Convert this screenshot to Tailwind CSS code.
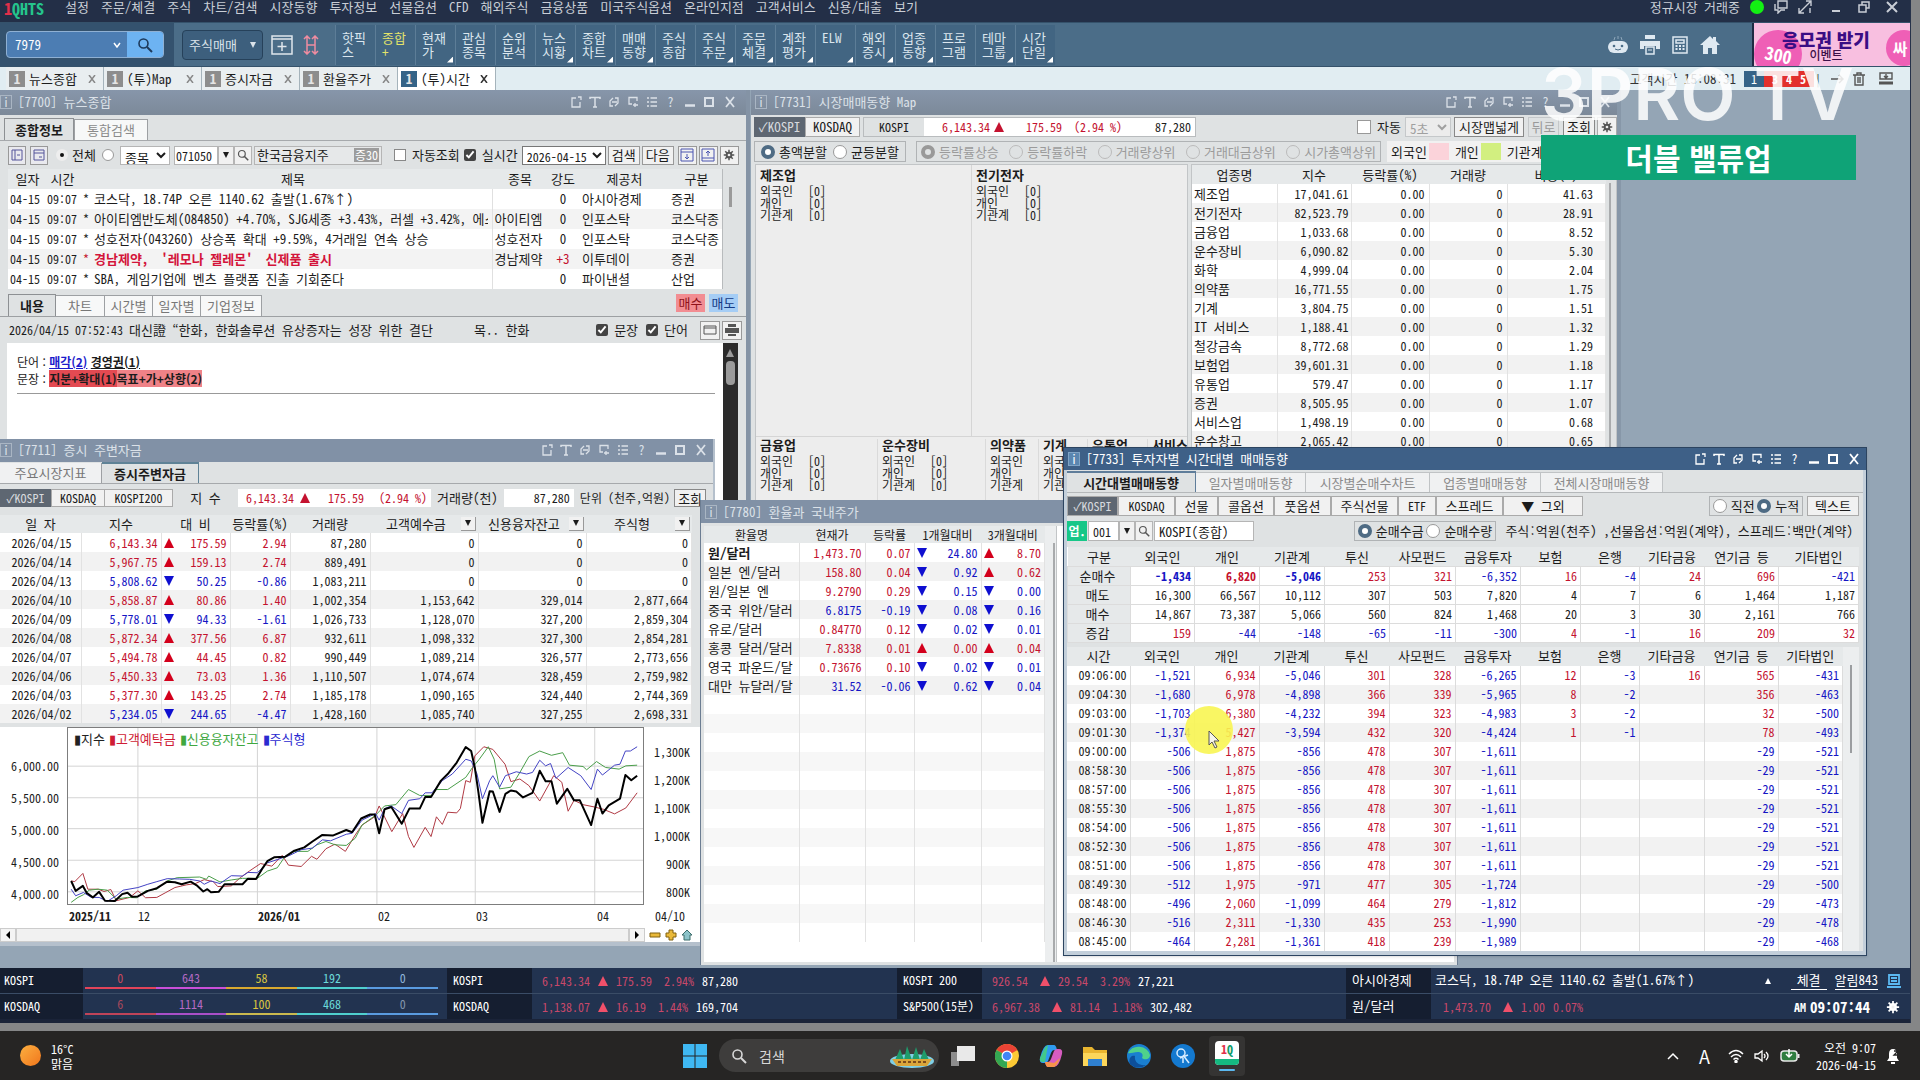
<!DOCTYPE html>
<html lang="ko">
<head>
    <meta charset="UTF-8">
    <meta name="viewport" content="width=device-width, initial-scale=1.0">
    <title>1QHTS</title>
    <script src="https://cdn.jsdelivr.net/npm/@tailwindcss/browser@4"></script>
</head>
<body class="flex h-screen flex-col overflow-hidden bg-[#858687] font-['Noto_Sans_Mono_CJK_KR','Noto_Sans_CJK_KR',sans-serif] text-[13px] leading-4 text-[#1c1c1c]">

    <!-- Shared icons -->
    <svg class="hidden">
        <symbol id="i-search" viewBox="0 0 16 16"><circle cx="6.5" cy="6.5" r="4.5" fill="none" stroke="currentColor" stroke-width="1.6"/><path d="M10 10l5 5" stroke="currentColor" stroke-width="2"/></symbol>
        <symbol id="i-gear" viewBox="0 0 16 16"><path d="M8 1v14M1 8h14M3 3l10 10M13 3L3 13" stroke="currentColor" stroke-width="2"/><circle cx="8" cy="8" r="4.5" fill="currentColor"/><circle cx="8" cy="8" r="1.8" fill="#eee"/></symbol>
        <symbol id="i-up" viewBox="0 0 10 10"><path d="M5 0l5 10H0z" fill="currentColor"/></symbol>
        <symbol id="i-down" viewBox="0 0 10 10"><path d="M0 0h10L5 10z" fill="currentColor"/></symbol>
    </svg>

    <template id="window-tools">
        <button aria-label="분리" class="grid h-4 w-[19px] place-items-center"><svg class="size-3" viewBox="0 0 12 12" fill="none" stroke="currentColor" stroke-width="1.3"><path d="M6 2H2v9h8V6M8 1h3v3"/></svg></button>
        <button aria-label="글꼴" class="grid h-4 w-[19px] place-items-center"><svg class="size-3" viewBox="0 0 12 12" fill="none" stroke="currentColor" stroke-width="1.5"><path d="M1 3V1.500h10V3M6 2v9M4 11h4"/></svg></button>
        <button aria-label="연동" class="grid h-4 w-[19px] place-items-center"><svg class="size-3" viewBox="0 0 12 12" fill="none" stroke="currentColor" stroke-width="1.3"><path d="M5 2L2 5v5h3M7 2h3v5L7 10M4 6h5"/></svg></button>
        <button aria-label="복사" class="grid h-4 w-[19px] place-items-center"><svg class="size-3" viewBox="0 0 12 12" fill="none" stroke="currentColor" stroke-width="1.3"><path d="M10 5V1.500H2V8h3M8 7v4M6 9h5"/></svg></button>
        <button aria-label="목록" class="grid h-4 w-[19px] place-items-center"><svg class="size-3" viewBox="0 0 12 12" stroke="currentColor" stroke-width="1.3"><path d="M1 2h2M4.500 2H11M1 6h2M4.500 6H11M1 10h2M4.500 10H11"/></svg></button>
        <button aria-label="도움말" class="h-4 w-[19px] text-center">?</button>
        <button aria-label="최소화" class="grid h-4 w-[19px] place-items-center"><svg class="size-3" viewBox="0 0 12 12" stroke="currentColor" stroke-width="2.500"><path d="M1 9.500h10"/></svg></button>
        <button aria-label="최대화" class="grid h-4 w-[19px] place-items-center"><svg class="size-3" viewBox="0 0 12 12" fill="none" stroke="currentColor" stroke-width="2"><path d="M2 2h8v8H2z"/></svg></button>
        <button aria-label="닫기" class="grid h-4 w-[24px] place-items-center"><svg class="size-3" viewBox="0 0 12 12" stroke="currentColor" stroke-width="1.800"><path d="M2 1l8 10M10 1L2 11"/></svg></button>
    </template>

    <div class="mr-[9px] flex min-h-0 flex-1 flex-col border-r border-[#26324a] bg-[#94a5b5]">

        <!-- Menu bar -->
        <header class="flex h-[22px] shrink-0 items-start justify-between bg-[#232f47] text-[#c9ced6]">
            <div class="flex items-start">
                <div class="flex w-[65px] pl-1 text-base leading-4 font-bold text-[#25c48c]"><span class="text-[#e2304a]">1</span>QHTS</div>
                <nav id="menu" class="flex gap-3 text-[13px] leading-[14px]"></nav>
            </div>
            <div class="flex items-center gap-2.5 leading-[14px]">
                <span>정규시장 거래중</span>
                <span class="size-3.5 rounded-full bg-[#13f013]"></span>
                <svg class="size-3.5" viewBox="0 0 14 14" fill="none" stroke="currentColor" stroke-width="1.4"><path d="M4 1h9v7H4zM1 4v6h3v3l3-3h4"/></svg>
                <svg class="size-3.5" viewBox="0 0 14 14" fill="none" stroke="currentColor" stroke-width="1.4"><path d="M1 13L13 1M8 1h5v5M1 8v5h5M12 8v5"/></svg>
                <div class="flex pr-1">
                    <button aria-label="최소화" class="grid w-7 place-items-center"><svg class="size-3" viewBox="0 0 12 12" stroke="currentColor" stroke-width="2"><path d="M2 10h8"/></svg></button>
                    <button aria-label="이전 크기" class="grid w-7 place-items-center"><svg class="size-3" viewBox="0 0 12 12" fill="none" stroke="currentColor" stroke-width="1.500"><path d="M4 4V1h7v6H8M1 4h7v7H1z"/></svg></button>
                    <button aria-label="닫기" class="grid w-7 place-items-center"><svg class="size-3" viewBox="0 0 12 12" stroke="currentColor" stroke-width="2"><path d="M1 1l10 10M11 1L1 11"/></svg></button>
                </div>
            </div>
        </header>

        <!-- Toolbar -->
        <div class="flex h-[45px] shrink-0 items-center border-y border-[#35526b] bg-[#4b6d88]">
            <div class="flex h-full w-[174px] items-center bg-[#34526e] pl-1.5">
                <div class="flex h-[27px] w-[158px] overflow-hidden rounded-sm border border-[#8fb0d3] bg-[#4c7db3]">
                    <input aria-label="화면번호" value="7979" class="w-[100px] min-w-0 pl-2 text-white">
                    <button aria-label="목록" class="grid w-5 place-items-center text-white"><svg class="size-2" viewBox="0 0 8 8" fill="none" stroke="currentColor" stroke-width="1.500"><path d="M1 2l3 4 3-4"/></svg></button>
                    <button aria-label="검색" class="grid flex-1 place-items-center bg-[#6db3f2] text-[#1d3a5c]"><svg class="size-4"><use href="#i-search"/></svg></button>
                </div>
            </div>
            <button class="ml-2 flex h-[30px] w-[81px] items-center justify-between rounded-sm border border-[#26415a] bg-[#3d5f7d] px-1.5 text-[#dbe3ea]">주식매매 <svg class="size-1.5"><use href="#i-down"/></svg></button>
            <button aria-label="화면추가" class="ml-2 text-[#dfe6ec]"><svg class="h-5 w-[22px]" viewBox="0 0 22 20" fill="none" stroke="currentColor" stroke-width="1.500"><path d="M1 1h20v18H1zM1 4h20M11 7v9M6.500 11.500h9"/></svg></button>
            <button aria-label="홈화면" class="ml-2.5 text-[#ef8ca0]"><svg class="h-5 w-4" viewBox="0 0 16 20" fill="none" stroke="currentColor" stroke-width="1.500"><path d="M4 1v18M12 1v18M4 10h8M1 4l3-3 3 3M9 4l3-3 3 3M1 16l3 3 3-3M9 16l3 3 3-3"/></svg></button>
            <div id="quick" class="ml-4 flex"></div>
            <div class="ml-auto flex h-full items-center text-[#dfe9f1]">
                <svg class="mr-3 h-[18px] w-5" viewBox="0 0 20 18"><path d="M6 4l1-3M10 3V0M14 4l-1-3" stroke="#8fa7ba"/><rect x="0" y="5" width="20" height="12" rx="6" fill="currentColor"/><circle cx="6" cy="10" r="1.300" fill="#4b6d88"/><circle cx="14" cy="10" r="1.300" fill="#4b6d88"/><path d="M7 13q3 2 6 0" stroke="#4b6d88" fill="none"/></svg>
                <svg class="mr-3 h-5 w-[20px]" viewBox="0 0 20 20"><path d="M5 0h10v4H5zM0 6h20v8h-4v-3H4v3H0z" fill="currentColor"/><path d="M6 12h8v7H6z" fill="none" stroke="currentColor" stroke-width="1.500"/><path d="M8 15h4" stroke="currentColor"/></svg>
                <svg class="mr-3 h-[18px] w-4" viewBox="0 0 16 18" fill="none" stroke="currentColor" stroke-width="1.500"><path d="M1 1h14v16H1zM4 4h8v3H4z"/><path d="M3.500 10h2M7 10h2M10.500 10h2M3.500 13h2M7 13h2M10.500 13h2" stroke-width="2"/></svg>
                <svg class="mr-8 h-5 w-5" viewBox="0 0 20 20"><path d="M10 1L0 10h3v9h5v-6h4v6h5v-9h3l-4-4V2h-3v2z" fill="currentColor"/></svg>
                <a href="#" class="relative flex h-full w-[158px] items-center justify-center overflow-hidden border-l-2 border-[#1e2b43] bg-[#f8bfe0] pr-3 leading-none">
                    <span class="absolute -bottom-3 left-0 grid size-12 place-items-center rounded-full bg-[#ef5fb6] text-lg font-black text-white"><span class="rotate-12">300</span></span>
                    <span class="absolute -right-3 bottom-0 grid size-9 place-items-center rounded-full bg-[#ef5fb6] pr-2 text-base font-black text-white">싸</span>
                    <span class="relative text-center font-['Noto_Sans_CJK_KR'] text-lg leading-5 font-black text-[#3a0d84]">응모권 받기<span class="block text-xs leading-3 font-medium text-[#3b1048]">이벤트</span></span>
                </a>
            </div>
        </div>

        <!-- Screen tabs -->
        <div class="flex h-[23px] shrink-0 items-stretch justify-between bg-[#e1edf2]">
            <div id="screens" class="flex pl-1.5"></div>
            <div class="flex items-center gap-2 pr-4 text-[#333]">
                <span>고객시간 15:08:31</span>
                <div class="flex h-4 w-[78px] text-center text-xs leading-4 text-white">
                    <span class="w-5 bg-[#356387]">1</span><span class="flex flex-1 justify-evenly bg-[#e2302c]"><b>3</b><b>4</b><b>5</b></span><span class="w-2 text-[#333]">|</span>
                </div>
                <svg class="size-3.5" viewBox="0 0 14 14" fill="none" stroke="#555" stroke-width="1.400"><path d="M1 7h12M9 3l4 4-4 4"/></svg>
                <svg class="size-3.5" viewBox="0 0 14 14" fill="none" stroke="#555" stroke-width="1.400"><path d="M1 3h12M5 3V1h4v2M3 3v10h8V3M6 5v6M8 5v6"/></svg>
                <svg class="ml-1 h-3.5 w-4" viewBox="0 0 16 14" fill="none" stroke="#555" stroke-width="1.400"><path d="M2 1h12v6H2zM8 2v4M6 4l2 2 2-2"/><path d="M1 11h14" stroke-width="3"/></svg>
            </div>
        </div>

        <!-- Window area -->
        <main class="relative min-h-0 flex-1 overflow-hidden">

            <!-- 7700 news -->
            <section class="absolute top-0 left-0 w-[750px] border-r-4 border-[#8493a5] bg-[#dfe2e3]">
                <h2 class="flex h-[25px] items-center justify-between bg-linear-to-b from-[#8796aa] to-[#7c8999] pb-0.5 text-[#dbe1e8]">
                    <span class="flex items-center gap-1.5"><i class="h-3.5 w-3 border border-[#a9b5c3] text-center text-xs leading-3 not-italic">i</i>[7700] 뉴스종합</span><span class="win-tools flex pr-1"></span>
                </h2>
                <div class="flex h-[26px] items-end border-b border-[#a6a9ac] pl-1">
                    <button class="h-[22px] w-[70px] border border-b-0 border-[#8d9093] bg-[#dfe2e3] font-bold">종합정보</button>
                    <button class="h-[21px] w-[74px] border border-b-0 border-[#9da0a3] bg-[#f7f8f8] text-[#8b8b8b]">통합검색</button>
                </div>
                <div class="flex h-[28px] items-center pl-2">
                    <button aria-label="좌측보기" class="mr-1 grid h-[19px] w-[18px] place-items-center border border-[#999] bg-[#e9e9ee]"><svg class="size-3" viewBox="0 0 12 12" fill="none" stroke="#54549a"><path d="M1 1h10v10H1zM4 1v10M6 6h3"/></svg></button>
                    <button aria-label="상단보기" class="mr-2 grid h-[19px] w-[18px] place-items-center border border-[#999] bg-[#e9e9ee]"><svg class="size-3" viewBox="0 0 12 12" fill="none" stroke="#54549a"><path d="M1 1h10v10H1zM1 4h10M6 8h3"/></svg></button>
                    <label class="flex items-center gap-1"><input type="radio" name="scope" checked class="size-3 appearance-none rounded-full border border-[#888] bg-white checked:border-4 checked:border-[#eee] checked:bg-[#111]">전체</label>
                    <input type="radio" name="scope" aria-label="종목" class="ml-1.5 size-3 appearance-none rounded-full border border-[#999] bg-white">
                    <select aria-label="구분" class="ml-1.5 h-[19px] w-[50px] border border-[#b5b5b5] bg-white"><option>종목</option></select>
                    <input aria-label="종목코드" value="071050" class="ml-1 h-[19px] w-[44px] border border-[#b5b5b5] bg-white pl-px text-xs">
                    <button aria-label="최근종목" class="grid h-[19px] w-4 place-items-center border border-[#b5b5b5] bg-[#f1f1f1]"><svg class="size-1.5"><use href="#i-down"/></svg></button>
                    <button aria-label="종목찾기" class="grid h-[19px] w-[18px] place-items-center border border-[#b5b5b5] bg-[#f1f1f1] text-[#555]"><svg class="size-3"><use href="#i-search"/></svg></button>
                    <span class="ml-0.5 flex h-[19px] w-[128px] items-center justify-between border border-[#b5b5b5] bg-[#e6e8e9] px-0.5">한국금융지주<b class="bg-[#9c9c9c] px-px text-xs leading-[14px] font-normal text-white">증30</b></span>
                    <label class="ml-3 flex items-center gap-1.5"><input type="checkbox" class="size-3 appearance-none border border-[#888] bg-white">자동조회</label>
                    <label class="ml-1 flex items-center gap-1.5"><input type="checkbox" checked class="size-3 accent-[#444]">실시간</label>
                    <select aria-label="일자" class="ml-1 h-[19px] w-[84px] border border-[#777] bg-white text-xs"><option>2026-04-15</option></select>
                    <button class="ml-0.5 h-[19px] w-8 border border-[#999] bg-[#f1f1f1]">검색</button>
                    <button class="ml-0.5 h-[19px] w-8 border border-[#999] bg-[#f1f1f1]">다음</button>
                    <button aria-label="펼치기" class="ml-1 grid size-[19px] place-items-center border border-[#999] bg-[#f1f1f1]"><svg class="size-3.5" viewBox="0 0 14 14" fill="none" stroke="#4a55b0"><path d="M1 1h12v12H1zM1 4h12M7 6v5M5 9l2 2 2-2"/></svg></button>
                    <button aria-label="접기" class="ml-0.5 grid size-[19px] place-items-center border border-[#999] bg-[#f1f1f1]"><svg class="size-3.5" viewBox="0 0 14 14" fill="none" stroke="#4a55b0"><path d="M1 1h12v12H1zM1 10h12M7 8V3M5 5l2-2 2 2"/></svg></button>
                    <button aria-label="설정" class="ml-0.5 grid size-[19px] place-items-center border border-[#999] bg-[#f1f1f1] text-[#555]"><svg class="size-3"><use href="#i-gear"/></svg></button>
                </div>
                <div class="flex pl-2">
                    <table class="w-[714px] table-fixed border-collapse bg-white">
                        <colgroup><col class="w-[39px]"><col class="w-[31px]"><col class="w-[16px]"><col class="w-[398px]"><col class="w-[56px]"><col class="w-[30px]"><col class="w-[93px]"><col></colgroup>
                        <thead class="bg-[#e6e9ea]">
                            <tr class="h-5 *:p-0 *:font-normal"><th>일자</th><th>시간</th><th></th><th>제목</th><th>종목</th><th>강도</th><th>제공처</th><th>구분</th></tr>
                        </thead>
                        <tbody id="news"></tbody>
                    </table>
                    <div class="flex-1 border-l border-[#b8bbbd] pt-[18px] pl-1.5"><div class="h-5 w-[3px] bg-[#9a9a9a]"></div></div>
                </div>
                <div class="flex h-7 items-end justify-between border-b border-[#9da0a3] pl-2">
                    <div class="flex">
                        <button class="h-[22px] w-[48px] border border-b-0 border-[#8d9093] bg-[#dfe2e3] font-bold">내용</button>
                        <button class="h-[21px] w-[49px] self-end border border-b-0 border-l-0 border-[#9da0a3] bg-[#f7f8f8] text-[#777]">차트</button>
                        <button class="h-[21px] w-[48px] self-end border border-b-0 border-l-0 border-[#9da0a3] bg-[#f7f8f8] text-[#777]">시간별</button>
                        <button class="h-[21px] w-[48px] self-end border border-b-0 border-l-0 border-[#9da0a3] bg-[#f7f8f8] text-[#777]">일자별</button>
                        <button class="h-[21px] w-[61px] self-end border border-b-0 border-l-0 border-[#9da0a3] bg-[#f7f8f8] text-[#777]">기업정보</button>
                    </div>
                    <div class="flex gap-1 self-center pr-2">
                        <button class="h-[18px] w-[29px] bg-[#f28d92] text-[#8e1219]">매수</button>
                        <button class="h-[18px] w-[29px] bg-[#a5cdf5] text-[#143a86]">매도</button>
                    </div>
                </div>
                <div class="flex h-[26px] items-center pl-[9px]">
                    <span class="text-xs">2026/04/15 07:52:43&nbsp;</span><span class="w-[345px]">대신證 “한화, 한화솔루션 유상증자는 성장 위한 결단</span><span>목.. 한화</span>
                    <label class="ml-auto flex items-center gap-1.5"><input type="checkbox" checked class="size-3 accent-[#444]">문장</label>
                    <label class="ml-2 flex items-center gap-1.5"><input type="checkbox" checked class="size-3 accent-[#444]">단어</label>
                    <button aria-label="새창" class="ml-3 grid h-[19px] w-5 place-items-center border border-[#999] bg-[#f1f1f1]"><svg class="h-2.5 w-3.5" viewBox="0 0 14 10" fill="none" stroke="#555"><path d="M1 1h12v8H1zM1 3h12"/></svg></button>
                    <button aria-label="인쇄" class="mr-1 ml-0.5 grid h-[19px] w-5 place-items-center border border-[#999] bg-[#f1f1f1]"><svg class="h-3 w-3.5" viewBox="0 0 14 12" fill="#555"><path d="M3 0h8v3H3zM0 4h14v5H0zM3 10h8v2H3z"/></svg></button>
                </div>
                <div class="ml-[7px] flex h-[180px] bg-white">
                    <div class="flex-1 pt-2.5 pl-2.5 font-['Noto_Sans_CJK_KR',sans-serif] text-xs leading-[17px]">
                        <p>단어 : <a href="#" class="font-bold text-[#1c1ccb] underline">매각(2)</a> <a href="#" class="font-bold underline">경영권(1)</a></p>
                        <p>문장 : <b class="bg-[#e34a52]">지분+확대(1)</b><b class="bg-[#ef8287]">목표+가+상향(2)</b></p>
                        <hr class="mt-1.5 mr-2 border-[#999]">
                    </div>
                    <div class="w-[15px] bg-[#2b2b2b] px-[3px] pt-1.5 text-[#9b9b9b]"><svg class="size-2"><use href="#i-up"/></svg><div class="mt-1 h-6 rounded bg-[#9b9b9b]"></div></div>
                    <div class="w-2 bg-[#dfe2e3]"></div>
                </div>
            </section>

            <!-- 7731 market map -->
            <section class="absolute top-0 left-[751px] w-[870px] border-r-4 border-[#8797a8] bg-[#dfe2e3]">
                <h2 class="flex h-[25px] items-center justify-between bg-linear-to-b from-[#8796aa] to-[#7c8999] pb-0.5 text-[#dbe1e8]">
                    <span class="flex items-center gap-1.5 pl-1"><i class="h-3.5 w-3 border border-[#a9b5c3] text-center text-xs leading-3 not-italic">i</i>[7731] 시장매매동향 Map</span><span class="win-tools flex"></span>
                </h2>
                <div class="flex h-[24px] items-center pl-[3px]">
                    <button class="h-5 w-[51px] bg-[#5e6772] text-[#d7dade]">✓KOSPI</button>
                    <button class="h-5 w-[55px] border border-[#aaa] bg-[#f1f1f1]">KOSDAQ</button>
                    <div class="ml-[3px] flex h-5 w-[333px] items-center border border-[#b9bcbe]">
                        <span class="w-[60px] text-center text-xs">KOSPI</span>
                        <div class="flex flex-1 items-center self-stretch bg-white pr-1 text-xs text-[#c4122f]"><span class="w-[66px] text-right">6,143.34</span><svg class="mx-1 size-2.5"><use href="#i-up"/></svg><span class="w-[54px] text-right">175.59</span><span class="w-[60px] text-right">(2.94 %)</span><span class="ml-auto text-[#1c1c1c]">87,280</span></div>
                    </div>
                    <label class="ml-auto flex items-center gap-1.5"><input type="checkbox" class="size-3.5 appearance-none border border-[#999] bg-white">자동</label>
                    <select aria-label="주기" disabled class="ml-1 h-5 w-[46px] border border-[#c5c8ca] bg-[#ececec] text-[#a0a0a0]"><option>5초</option></select>
                    <button class="ml-[3px] h-5 w-[70px] border border-[#888] bg-[#f1f1f1]">시장맵넓게</button>
                    <button disabled class="ml-1 h-5 w-[31px] border border-[#c5c8ca] text-[#999]">뒤로</button>
                    <button class="ml-1 h-5 w-8 border border-[#888] bg-[#f1f1f1]">조회</button>
                    <button aria-label="설정" class="ml-0.5 grid size-5 place-items-center border border-[#aaa] bg-[#f1f1f1] text-[#555]"><svg class="size-3"><use href="#i-gear"/></svg></button>
                </div>
                <div class="flex h-[25px] items-center pl-[3px]">
                    <div class="flex h-[21px] w-[152px] items-center justify-evenly border border-[#b0b3b5]">
                        <label class="flex items-center gap-1"><input type="radio" name="split" checked class="size-3.5 appearance-none rounded-full border border-[#999] bg-white checked:border-4 checked:border-[#4e6b84]">총액분할</label>
                        <label class="flex items-center gap-1"><input type="radio" name="split" class="size-3.5 appearance-none rounded-full border border-[#999] bg-white">균등분할</label>
                    </div>
                    <div class="ml-2.5 flex h-[21px] w-[465px] items-center justify-between border border-[#b0b3b5] px-1 text-[#9b9b9b]">
                        <label class="flex items-center gap-1"><input type="radio" name="sort" disabled checked class="size-3.5 appearance-none rounded-full border border-[#bbb] checked:border-4 checked:border-[#999]">등락률상승</label>
                        <label class="flex items-center gap-1"><input type="radio" name="sort" disabled class="size-3.5 appearance-none rounded-full border border-[#bbb]">등락률하락</label>
                        <label class="flex items-center gap-1"><input type="radio" name="sort" disabled class="size-3.5 appearance-none rounded-full border border-[#bbb]">거래량상위</label>
                        <label class="flex items-center gap-1"><input type="radio" name="sort" disabled class="size-3.5 appearance-none rounded-full border border-[#bbb]">거래대금상위</label>
                        <label class="flex items-center gap-1"><input type="radio" name="sort" disabled class="size-3.5 appearance-none rounded-full border border-[#bbb]">시가총액상위</label>
                    </div>
                    <div class="ml-1.5 flex h-[21px] flex-1 items-center gap-1.5 bg-[#f1f1f1] pl-1">외국인<i class="-ml-1 h-[17px] w-5 bg-[#fbd3da]"></i>개인<i class="-ml-1 h-[17px] w-5 bg-[#d2ef80]"></i>기관계<i class="-ml-1 h-[17px] w-5 bg-[#bcd9f5]"></i></div>
                </div>
                <div class="flex pl-1">
                    <div class="flex w-[433px] flex-col border border-[#c2c5c7] bg-[#ededed]">
                        <div class="flex h-[272px] border-b border-[#d5d5d5]">
                            <div class="w-[216px] border-r border-[#d5d5d5] pt-1 pl-1 text-xs leading-3"><b class="mb-1 block text-[13px]">제조업</b><p class="flex"><span class="w-[48px]">외국인</span>[0]</p><p class="flex"><span class="w-[48px]">개인</span>[0]</p><p class="flex"><span class="w-[48px]">기관계</span>[0]</p></div>
                            <div class="pt-1 pl-1 text-xs leading-3"><b class="mb-1 block text-[13px]">전기전자</b><p class="flex"><span class="w-[48px]">외국인</span>[0]</p><p class="flex"><span class="w-[48px]">개인</span>[0]</p><p class="flex"><span class="w-[48px]">기관계</span>[0]</p></div>
                        </div>
                        <div id="sectors" class="flex h-[90px] overflow-hidden pt-0.5"></div>
                    </div>
                    <div class="ml-[3px] flex flex-1 border border-[#c2c5c7]">
                        <table class="w-[414px] table-fixed self-start border-collapse bg-white text-xs">
                            <colgroup><col class="w-[85px]"><col class="w-[74px]"><col class="w-[78px]"><col class="w-[78px]"><col></colgroup>
                            <thead class="bg-[#e6e9ea] text-[13px]"><tr class="h-[19px] *:p-0 *:font-normal"><th>업종명</th><th>지수</th><th>등락률(%)</th><th>거래량</th><th>비중(%)</th></tr></thead>
                            <tbody id="industries"></tbody>
                        </table>
                        <div class="pt-[18px] pl-[3px]"><div class="h-full w-0.5 bg-[#a9abad]"></div></div>
                    </div>
                </div>
            </section>

            <!-- 7711 market funds -->
            <section class="absolute top-[349px] left-0 w-[715px] border-r-2 border-b-4 border-[#b5c0cc] bg-[#dfe2e3]">
                <h2 class="flex h-[23px] items-center justify-between bg-[#8191a6] pb-px text-[#dbe1e8]">
                    <span class="flex items-center gap-1.5"><i class="h-3.5 w-3 border border-[#a9b5c3] text-center text-xs leading-3 not-italic">i</i>[7711] 증시 주변자금</span><span class="win-tools flex"></span>
                </h2>
                <div class="flex h-[22px] items-end border-b border-[#a6a9ac]">
                    <button class="h-5 w-[102px] border-r border-[#9da0a3] bg-[#f0f1f2] text-[#777]">주요시장지표</button>
                    <button class="h-[21px] w-[97px] border-t-2 border-r border-[#5f8296] bg-[#dfe2e3] font-bold">증시주변자금</button>
                </div>
                <div class="flex h-7 items-center text-xs">
                    <button class="h-[18px] w-[51px] bg-[#5e6772] text-[#d7dade]">✓KOSPI</button>
                    <button class="h-[18px] w-[54px] border border-[#aaa] bg-[#f1f1f1]">KOSDAQ</button>
                    <button class="h-[18px] w-[68px] border border-l-0 border-[#aaa] bg-[#f1f1f1]">KOSPI200</button>
                    <span class="w-[65px] text-center text-[13px]">지 수</span>
                    <div class="flex h-[18px] w-[193px] items-center bg-white text-[#c4122f]"><span class="w-[56px] text-right">6,143.34</span><svg class="mx-1.5 size-2.5"><use href="#i-up"/></svg><span class="w-[48px] text-right">175.59</span><span class="ml-auto pr-1">(2.94 %)</span></div>
                    <span class="px-1.5 text-[13px]">거래량(천)</span>
                    <span class="h-[18px] w-[70px] bg-white pr-1 text-right leading-[18px]">87,280</span>
                    <span class="pl-1.5">단위 (천주,억원)</span>
                    <button class="ml-1 h-[18px] w-8 border border-[#888] bg-[#f1f1f1] text-[13px]">조회</button>
                </div>
                <table class="mt-[3px] w-[692px] table-fixed border-collapse bg-white text-xs">
                    <colgroup><col class="w-[81px]"><col class="w-[80px]"><col class="w-[69px]"><col class="w-[60px]"><col class="w-[80px]"><col class="w-[108px]"><col class="w-[108px]"><col></colgroup>
                    <thead class="bg-[#e6e9ea] text-[13px]">
                        <tr class="h-[18px] *:p-0 *:font-normal"><th>일 자</th><th>지수</th><th>대 비</th><th>등락률(%)</th><th>거래량</th>
                            <th><span class="flex items-center justify-between pr-0.5 pl-4">고객예수금<button aria-label="고객예수금 선택" class="grid h-3.5 w-[15px] place-items-center border-r border-b border-[#999] bg-[#f1f1f1]"><svg class="size-1.5"><use href="#i-down"/></svg></button></span></th>
                            <th><span class="flex items-center justify-between pr-0.5 pl-2.5">신용융자잔고<button aria-label="신용융자잔고 선택" class="grid h-3.5 w-[15px] place-items-center border-r border-b border-[#999] bg-[#f1f1f1]"><svg class="size-1.5"><use href="#i-down"/></svg></button></span></th>
                            <th><span class="flex items-center justify-between pr-0.5 pl-7">주식형<button aria-label="주식형 선택" class="grid h-3.5 w-[15px] place-items-center border-r border-b border-[#999] bg-[#f1f1f1]"><svg class="size-1.5"><use href="#i-down"/></svg></button></span></th></tr>
                    </thead>
                    <tbody id="funds"></tbody>
                </table>
                <div class="mt-1 flex w-[700px] bg-white text-xs">
                    <div class="w-[67px] pt-[23px] pr-2 text-right leading-8"><p>6,000.00</p><p>5,500.00</p><p>5,000.00</p><p>4,500.00</p><p>4,000.00</p></div>
                    <div class="relative h-[178px] w-[577px] border border-[#7d7d7d]">
                        <svg class="size-full" viewBox="148 25 1275 535" preserveAspectRatio="none" fill="none" stroke-linejoin="round">
                            <g stroke="#d4d4d4" stroke-width="1"><path vector-effect="non-scaling-stroke" d="M148 141H1423M148 237H1423M148 331H1423M148 427H1423M148 523H1423M303 25V560M568 25V560M833 25V560M1051 25V560M1316 25V560"/></g>
                            <polyline vector-effect="non-scaling-stroke" stroke="#b03a44" points="155,490 163,492 181,467 192,515 215,515 228,522 243,516 255,550 285,540 303,520 320,541 345,540 365,525 385,510 410,502 430,498 450,486 470,492 480,507 510,505 530,480 550,460 575,437 600,445 623,412 637,442 665,446 688,415 700,424 720,392 740,378 763,400 785,350 800,320 828,295 838,262 866,340 890,285 903,355 915,388 940,327 953,355 965,295 978,318 990,281 1010,283 1018,270 1030,185 1040,190 1050,110 1070,82 1090,90 1117,135 1130,188 1150,180 1170,200 1194,247 1225,170 1243,190 1257,278 1270,245 1290,258 1315,265 1335,272 1360,286 1385,268 1410,222"/>
                            <polyline vector-effect="non-scaling-stroke" stroke="#4a9e4a" points="155,555 170,540 182,532 195,518 215,515 235,518 255,545 280,540 300,541 320,520 345,515 368,490 390,480 440,478 455,485 460,475 485,493 510,487 535,482 568,482 590,460 612,450 628,418 650,400 680,400 700,380 720,370 740,380 765,382 785,360 800,320 830,290 850,262 875,258 903,212 928,230 955,230 965,212 990,212 1030,175 1045,145 1060,120 1080,82 1093,120 1105,210 1130,205 1150,160 1170,112 1194,95 1220,108 1245,100 1260,138 1290,142 1298,152 1320,127 1340,145 1370,150 1385,140 1410,138"/>
                            <polyline vector-effect="non-scaling-stroke" stroke="#4343c4" points="155,515 165,535 182,525 200,540 217,540 235,552 255,535 270,518 303,510 325,500 345,492 368,483 395,484 418,485 440,490 450,500 465,490 485,498 510,474 535,475 547,464 568,465 590,435 612,425 640,412 665,395 690,390 712,365 730,368 765,348 778,345 800,305 830,285 838,305 850,270 865,262 888,285 903,245 928,240 940,222 955,222 978,185 1000,165 1030,120 1042,125 1055,165 1067,240 1083,185 1090,170 1105,205 1118,170 1142,158 1165,165 1178,160 1194,123 1207,140 1218,133 1230,178 1257,145 1285,170 1308,212 1322,150 1333,168 1360,138 1372,135 1384,95 1395,95 1410,82"/>
                            <polyline vector-effect="non-scaling-stroke" stroke="#000" stroke-width="2" points="155,490 165,520 181,505 190,527 203,540 217,523 230,550 252,551 268,530 280,526 290,538 303,537 325,520 345,512 368,492 385,494 400,500 420,492 435,505 448,522 457,515 465,524 482,523 495,500 535,500 547,483 565,484 580,450 590,430 605,418 630,416 650,398 672,388 690,370 712,350 735,352 765,335 778,342 798,300 818,288 828,288 838,345 850,272 865,265 888,316 905,270 928,270 940,235 953,235 975,185 990,165 1010,130 1030,83 1042,95 1050,145 1058,220 1067,313 1083,217 1090,218 1105,280 1118,225 1130,215 1142,218 1157,236 1178,222 1194,155 1207,187 1220,187 1232,255 1255,210 1270,245 1283,245 1308,320 1322,240 1333,285 1347,260 1372,240 1384,168 1397,184 1410,170"/>
                        </svg>
                        <div class="absolute top-0.5 left-1.5 flex gap-1 text-[13px]"><span class="text-[#222]">▮지수</span><span class="text-[#cf1d36]">▮고객예탁금</span><span class="text-[#3fa83f]">▮신용융자잔고</span><span class="text-[#2a2ad0]">▮주식형</span></div>
                    </div>
                    <div class="w-[56px] pt-[11px] pr-2.5 text-right leading-7"><p>1,300K</p><p>1,200K</p><p>1,100K</p><p>1,000K</p><p>900K</p><p>800K</p></div>
                </div>
                <div class="flex h-[18px] w-[700px] bg-white pl-[69px] text-xs leading-3"><b class="w-[69px]">2025/11</b><span class="w-[120px]">12</span><b class="w-[120px]">2026/01</b><span class="w-[98px]">02</span><span class="w-[121px]">03</span><span class="w-[58px]">04</span><span>04/10</span></div>
                <div class="flex h-3.5 w-[700px] items-center bg-white">
                    <button aria-label="이전" class="grid h-full w-4 place-items-center border border-[#ccc] bg-[#f4f4f4]"><svg class="size-2" viewBox="0 0 8 8"><path d="M6 0v8L2 4z"/></svg></button>
                    <div class="h-full w-[613px] border border-[#ccc] bg-[#f1f1f1]"></div>
                    <button aria-label="다음" class="grid h-full w-4 place-items-center border border-[#ccc] bg-[#f4f4f4]"><svg class="size-2" viewBox="0 0 8 8"><path d="M2 0v8l4-4z"/></svg></button>
                    <button aria-label="축소" class="ml-1"><svg class="size-3" viewBox="0 0 12 12"><path d="M1 4h10v4H1z" fill="#e9b93a" stroke="#806010"/></svg></button>
                    <button aria-label="확대" class="ml-1"><svg class="size-3" viewBox="0 0 12 12"><path d="M4 1h4v3h3v4H8v3H4V8H1V4h3z" fill="#e9b93a" stroke="#806010"/></svg></button>
                    <button aria-label="처음" class="ml-1"><svg class="size-3" viewBox="0 0 12 12"><path d="M6 1l5 5H9v5H3V6H1z" fill="#8cc3c9" stroke="#3b6d6b"/></svg></button>
                </div>
            </section>

            <!-- 7780 exchange rates -->
            <section class="absolute top-[410px] left-[700px] flex h-[465px] w-[758px] flex-col border-x border-[#6c7d92] bg-[#dfe2e3]">
                <h2 class="flex h-[23px] shrink-0 items-center bg-[#8191a6] text-[#dbe1e8]"><span class="flex items-center gap-1.5 pl-1"><i class="h-3.5 w-3 border border-[#a9b5c3] text-center text-xs leading-3 not-italic">i</i>[7780] 환율과 국내주가</span></h2>
                <div class="m-[3px] flex flex-1 bg-white">
                    <table class="w-[341px] table-fixed border-collapse self-start text-xs">
                        <colgroup><col class="w-[95px]"><col class="w-[66px]"><col class="w-[49px]"><col class="w-[67px]"><col></colgroup>
                        <thead class="bg-[#e6e9ea]"><tr class="h-[17px] *:p-0 *:font-normal"><th>환율명</th><th>현재가</th><th>등락률</th><th>1개월대비</th><th>3개월대비</th></tr></thead>
                        <tbody id="rates"></tbody>
                    </table>
                    <div class="w-3 border-r border-[#c2c5c7] bg-[#eceeef] pt-[17px] pl-2"><div class="h-full w-0.5 bg-[#a9abad]"></div></div>
                    <div class="flex flex-1 items-end gap-[78px] pb-2 pl-[78px] text-xs leading-3"><b>2025</b><b>2026</b><span class="ml-[48px] border-l border-[#888] pl-2.5">04/15</span></div>
                </div>
            </section>

            <!-- 7733 investors by time -->
            <section class="absolute top-[357px] left-[1063px] w-[804px] border border-[#2c4460] bg-[#dfe2e3] shadow">
                <h2 class="flex h-[22px] items-center justify-between bg-[#3e6087] pb-px text-white"><span class="flex items-center gap-1.5 pl-1"><i class="h-3.5 w-3 border border-[#7fa3c5] bg-[#5a86b0] text-center text-xs leading-3 not-italic">i</i>[7733] 투자자별 시간대별 매매동향</span><span class="win-tools flex"></span></h2>
                <div class="border-x-[3px] border-b-4 border-[#c3cfda]">
                    <div class="flex h-[23px] items-end border-b border-[#b5b8ba]">
                        <button class="h-[21px] w-[129px] border-t-2 border-r border-[#5f7d9a] bg-[#dfe2e3] font-bold">시간대별매매동향</button>
                        <button class="h-5 w-[110px] border-t border-r border-[#c0c3c5] bg-[#f0f1f2] text-[#8b8b8b]">일자별매매동향</button>
                        <button class="h-5 w-[124px] border-t border-r border-[#c0c3c5] bg-[#f0f1f2] text-[#8b8b8b]">시장별순매수차트</button>
                        <button class="h-5 w-[111px] border-t border-r border-[#c0c3c5] bg-[#f0f1f2] text-[#8b8b8b]">업종별매매동향</button>
                        <button class="h-5 w-[122px] border-t border-r border-[#c0c3c5] bg-[#f0f1f2] text-[#8b8b8b]">전체시장매매동향</button>
                    </div>
                    <div class="flex h-[26px] items-center justify-between pr-1">
                        <div class="flex h-5 *:border *:border-[#aaa]">
                            <button class="w-[51px] bg-[#5e6772] text-xs text-[#d7dade]">✓KOSPI</button>
                            <button class="w-[57px] bg-[#f1f1f1] text-xs">KOSDAQ</button>
                            <button class="w-[43px] bg-[#f1f1f1]">선물</button>
                            <button class="w-[56px] bg-[#f1f1f1]">콜옵션</button>
                            <button class="w-[57px] bg-[#f1f1f1]">풋옵션</button>
                            <button class="w-[67px] bg-[#f1f1f1]">주식선물</button>
                            <button class="w-[38px] bg-[#f1f1f1] text-xs">ETF</button>
                            <button class="w-[67px] bg-[#f1f1f1]">스프레드</button>
                            <button class="w-[80px] bg-[#f1f1f1]">▼ 그외</button>
                        </div>
                        <div class="flex">
                            <div class="flex h-5 w-[94px] items-center justify-evenly border border-[#b0b3b5]">
                                <label class="flex items-center gap-1"><input type="radio" name="base" class="size-3.5 appearance-none rounded-full border border-[#999] bg-white">직전</label>
                                <label class="flex items-center gap-1"><input type="radio" name="base" checked class="size-3.5 appearance-none rounded-full border border-[#999] bg-white checked:border-4 checked:border-[#4e6b84]">누적</label>
                            </div>
                            <button class="ml-1 h-5 w-[52px] border border-[#aaa] bg-[#f1f1f1]">텍스트</button>
                        </div>
                    </div>
                    <div class="flex h-6 items-center pr-2.5">
                        <button class="h-5 w-5 bg-[#17c788] text-xs font-bold text-white">업.</button>
                        <input aria-label="업종코드" value="001" class="ml-px h-5 w-[31px] border border-[#b5b5b5] bg-white pl-1 text-xs">
                        <button aria-label="최근업종" class="grid h-5 w-4 place-items-center border border-[#b5b5b5] bg-[#f1f1f1]"><svg class="size-1.5"><use href="#i-down"/></svg></button>
                        <button aria-label="업종찾기" class="grid h-5 w-[18px] place-items-center border border-[#b5b5b5] bg-[#f1f1f1] text-[#555]"><svg class="size-3"><use href="#i-search"/></svg></button>
                        <input aria-label="업종명" value="KOSPI(종합)" class="ml-px h-5 w-[100px] border border-[#b5b5b5] bg-white pl-1">
                        <div class="ml-[100px] flex h-5 w-[142px] items-center justify-evenly border border-[#b0b3b5]">
                            <label class="flex items-center gap-1"><input type="radio" name="unit" checked class="size-3.5 appearance-none rounded-full border border-[#999] bg-white checked:border-4 checked:border-[#4e6b84]">순매수금</label>
                            <label class="flex items-center gap-1"><input type="radio" name="unit" class="size-3.5 appearance-none rounded-full border border-[#999] bg-white">순매수량</label>
                        </div>
                        <span class="ml-auto text-[13px] whitespace-nowrap">주식:억원(천주) ,선물옵션:억원(계약), 스프레드:백만(계약)</span>
                    </div>
                    <table class="mt-1 w-[792px] table-fixed border-collapse bg-white text-xs">
                        <colgroup><col class="w-[63px]"><col class="w-[64px]"><col class="w-[65px]"><col class="w-[65px]"><col class="w-[65px]"><col class="w-[66px]"><col class="w-[65px]"><col class="w-[60px]"><col class="w-[59px]"><col class="w-[65px]"><col class="w-[74px]"><col></colgroup>
                        <thead class="bg-[#e6e9ea] text-[13px]"><tr class="h-[19px] *:p-0 *:font-normal"><th>구분</th><th>외국인</th><th>개인</th><th>기관계</th><th>투신</th><th>사모펀드</th><th>금융투자</th><th>보험</th><th>은행</th><th>기타금융</th><th>연기금 등</th><th>기타법인</th></tr></thead>
                        <tbody id="totals"></tbody>
                    </table>
                    <div class="mt-1 flex">
                        <table class="w-[776px] table-fixed border-collapse bg-white text-xs">
                            <colgroup><col class="w-[63px]"><col class="w-[64px]"><col class="w-[65px]"><col class="w-[65px]"><col class="w-[65px]"><col class="w-[66px]"><col class="w-[65px]"><col class="w-[60px]"><col class="w-[59px]"><col class="w-[65px]"><col class="w-[74px]"><col></colgroup>
                            <thead class="bg-[#e6e9ea] text-[13px]"><tr class="h-[19px] *:p-0 *:font-normal"><th>시간</th><th>외국인</th><th>개인</th><th>기관계</th><th>투신</th><th>사모펀드</th><th>금융투자</th><th>보험</th><th>은행</th><th>기타금융</th><th>연기금 등</th><th>기타법인</th></tr></thead>
                            <tbody id="times"></tbody>
                        </table>
                        <div class="w-4 bg-[#eceeef] pt-[18px] pl-[7px]"><div class="h-[88px] w-0.5 bg-[#9b9da0]"></div></div>
                    </div>
                </div>
            </section>
        </main>

        <!-- Status bar -->
        <footer class="shrink-0 border-b-4 border-[#1a2338] bg-[#3a4c66] text-xs text-white">
            <div class="mb-px flex h-[25px] bg-[#223350]">
                <span class="w-[83px] bg-[#151e30] pl-1 leading-6">KOSPI</span>
                <div class="flex w-[357px] px-0.5 pt-0.5 text-center">
                    <span class="h-[19px] flex-1 border-b-2 border-[#e2445a] text-[#c8485c]">0</span><span class="h-[19px] flex-1 border-b-2 border-[#c94fd8] text-[#b56ac4]">643</span><span class="h-[19px] flex-1 border-b-2 border-[#d9a92f] text-[#d9c53f]">58</span><span class="h-[19px] flex-1 border-b-2 border-[#4fcfcf] text-[#6bdada]">192</span><span class="h-[19px] flex-1 border-b-2 border-[#5a9be0] text-[#8fb6dd]">0</span>
                </div>
                <span class="ml-[7px] w-[85px] bg-[#151e30] pl-1.5 leading-6">KOSPI</span>
                <div class="flex w-[365px] items-center gap-2 pl-2.5 text-[#c8486a]">6,143.34 <svg class="size-2.5 text-[#f0506a]"><use href="#i-up"/></svg> 175.59 <span class="ml-1">2.94%</span> <span class="text-white">87,280</span></div>
                <span class="w-[85px] bg-[#151e30] pl-1.5 leading-6">KOSPI 200</span>
                <div class="flex w-[364px] items-center gap-2 pl-2.5 text-[#c8486a]">926.54 <svg class="ml-1 size-2.5 text-[#f0506a]"><use href="#i-up"/></svg> 29.54 <span class="ml-1">3.29%</span> <span class="text-white">27,221</span></div>
                <span class="w-[85px] bg-[#151e30] pl-1.5 text-[13px] leading-6">아시아경제</span>
                <span class="pl-1 text-[13px] leading-6">코스닥, 18.74P 오른 1140.62 출발(1.67%↑)</span>
                <div class="ml-auto flex items-center gap-2 pr-2 text-[13px]"><svg class="mr-3 size-1.5"><use href="#i-up"/></svg><a href="#" class="border-b border-white px-1.5">체결</a><a href="#" class="border-b border-white">알림843</a><svg class="h-4 w-4" viewBox="0 0 16 16" fill="none" stroke="#5bb8f0" stroke-width="1.800"><path d="M3 2h10v9H3zM5 5h6M5 8h6M1 14h14"/></svg></div>
            </div>
            <div class="flex h-[25px] bg-[#223350]">
                <span class="w-[83px] bg-[#151e30] pl-1 leading-6">KOSDAQ</span>
                <div class="flex w-[357px] px-0.5 pt-0.5 text-center">
                    <span class="h-[19px] flex-1 border-b-2 border-[#c04459] text-[#a8485c]">6</span><span class="h-[19px] flex-1 border-b-2 border-[#a94fc8] text-[#b56ac4]">1114</span><span class="h-[19px] flex-1 border-b-2 border-[#c9b94f] text-[#d9c53f]">100</span><span class="h-[19px] flex-1 border-b-2 border-[#4fcfcf] text-[#6bdada]">468</span><span class="h-[19px] flex-1 border-b-2 border-[#5a9be0] text-[#8396ad]">0</span>
                </div>
                <span class="ml-[7px] w-[85px] bg-[#151e30] pl-1.5 leading-6">KOSDAQ</span>
                <div class="flex w-[365px] items-center gap-2 pl-2.5 text-[#c8486a]">1,138.07 <svg class="size-2.5 text-[#f0506a]"><use href="#i-up"/></svg> 16.19 <span class="ml-1">1.44%</span> <span class="text-white">169,704</span></div>
                <span class="w-[85px] bg-[#151e30] pl-1.5 leading-6">S&amp;P500(15분)</span>
                <div class="flex w-[364px] items-center gap-2 pl-2.5 text-[#c8486a]">6,967.38 <svg class="ml-1 size-2.5 text-[#f0506a]"><use href="#i-up"/></svg> 81.14 <span class="ml-1">1.18%</span> <span class="text-white">302,482</span></div>
                <span class="w-[85px] bg-[#151e30] pl-1.5 text-[13px] leading-6">원/달러</span>
                <div class="flex items-center gap-2 pl-3 text-[#c8486a]">1,473.70 <svg class="ml-1 size-2.5 text-[#f0506a]"><use href="#i-up"/></svg> 1.00 <span>0.07%</span></div>
                <div class="ml-auto flex items-center gap-1 pr-2.5 font-bold">AM <span class="mr-3 text-[15px]">09:07:44</span><svg class="size-3.5"><use href="#i-gear"/></svg></div>
            </div>
        </footer>
    </div>

    <!-- Taskbar -->
    <div class="mt-2 flex h-[49px] shrink-0 items-center bg-[#262524] text-white">
        <div class="flex w-[683px] items-center gap-2.5 pl-5 text-xs leading-[15px]">
            <span class="size-[21px] rounded-full bg-linear-to-br from-[#fbb040] to-[#f0751a]"></span>
            <div>16°C<br>맑음</div>
        </div>
        <button aria-label="시작"><svg class="size-6" viewBox="0 0 24 24" fill="#3fb8f3"><path d="M0 0h11.500v11.500H0zM12.500 0H24v11.500H12.500zM0 12.500h11.500V24H0zM12.500 12.500H24V24H12.500z"/></svg></button>
        <button class="ml-3 flex h-[33px] w-[220px] items-center gap-3 rounded-full bg-[#3e3d3c] pr-1 pl-3 text-sm text-[#d8d8d8]">
            <svg class="size-4"><use href="#i-search"/></svg>검색
            <svg class="ml-auto h-6 w-[46px]" viewBox="0 0 46 24"><ellipse cx="23" cy="17" rx="22" ry="7" fill="#7fd0e6"/><path d="M6 16L11 5l4 11 3-14 5 14 4-13 4 13 4-11 5 11z" fill="#1f9c6c"/><path d="M3 15h40l-5 7H8z" fill="#d9a53a"/><path d="M9 18h28" stroke="#7a4b1c" stroke-width="2" stroke-dasharray="3 2"/></svg>
        </button>
        <div class="ml-3 flex items-center gap-5">
            <svg class="h-5 w-6" viewBox="0 0 24 20"><path d="M0 6h8v14H0z" fill="#8d8d8d"/><path d="M6 0h18v15H6z" fill="#e9e9e9"/></svg>
            <svg class="size-6" viewBox="0 0 24 24"><circle cx="12" cy="12" r="12" fill="#fcc934"/><path d="M12 12L1.600 6a12 12 0 0120.800 0z" fill="#ea4335"/><path d="M12 12L1.600 6A12 12 0 0012 24z" fill="#34a853"/><circle cx="12" cy="12" r="5.500" fill="#fff"/><circle cx="12" cy="12" r="4.300" fill="#4285f4"/></svg>
            <svg class="size-6" viewBox="0 0 24 24"><path d="M9 1h6q2 0 3 5h-3q-2 0-3 3l-3 8q-1 2-3 2H4q-4 0-3-5Q4 1 9 1z" fill="#2f9bf0"/><path d="M3 10Q6 2 9 1l-3 17H4q-4 0-3-4z" fill="#42c98a"/><path d="M15 23H9q-2 0-3-5h3q2 0 3-3l3-8q1-2 3-2h2q4 0 3 5-3 13-8 13z" fill="#d65cc0"/><path d="M21 14q-3 8-6 9H9q-2 0-3-5h3l6 1z" fill="#f6944a"/></svg>
            <svg class="size-6" viewBox="0 0 24 24"><path d="M0 3h9l3 3h12v16H0z" fill="#e9b52f"/><path d="M0 9h24v13H0z" fill="#fbd65a"/><path d="M5 15h14v7H5z" fill="#2f80d0"/></svg>
            <svg class="size-6" viewBox="0 0 24 24"><circle cx="12" cy="12" r="12" fill="#1a7fd0"/><path d="M1 9a12 12 0 0122 2c0 5-6 5-8 3 2-4-1-6-4-6-5 0-8 2-10 1z" fill="#4fd18b"/><path d="M8 12c-1 6 4 10 11 9a12 12 0 01-16-1c-2-5 1-9 5-8z" fill="#0d4f9a"/></svg>
            <svg class="size-6" viewBox="0 0 24 24"><circle cx="12" cy="12" r="12" fill="#1479cf"/><circle cx="10" cy="9" r="4" fill="none" stroke="#d6ecff" stroke-width="1.500"/><path d="M12 11l6 8M12 14v5M9 14l8-3" stroke="#d6ecff" stroke-width="1.500"/></svg>
            <div class="-ml-1.5 flex h-10 w-9 flex-col items-center justify-center gap-1 rounded bg-[#353433]">
                <div class="flex h-6 w-6 flex-col overflow-hidden rounded bg-white text-center text-xs leading-4 font-bold text-[#119c6c]"><span><span class="text-[#e2304a]">1</span>Q</span><i class="mt-auto h-1.5 bg-[#15b981]"></i></div>
                <i class="h-0.5 w-4 rounded bg-[#5bb8f0]"></i>
            </div>
        </div>
        <div class="ml-auto flex items-center gap-2.5 pr-5 text-xs">
            <svg class="mr-2.5 h-2 w-3" viewBox="0 0 12 8" fill="none" stroke="currentColor" stroke-width="1.500"><path d="M1 7l5-5 5 5"/></svg>
            <span class="mr-2 font-['Noto_Sans_CJK_KR'] text-lg">A</span>
            <svg class="h-3.5 w-4" viewBox="0 0 16 14" fill="none" stroke="currentColor" stroke-width="1.500"><path d="M1 5q7-7 14 0M3 8q5-5 10 0M5.500 10.500q2.500-2.500 5 0"/><circle cx="8" cy="12.500" r="1" fill="currentColor"/></svg>
            <svg class="h-3.5 w-4" viewBox="0 0 16 14" fill="none" stroke="currentColor" stroke-width="1.300"><path d="M1 5h3l4-3v10L4 9H1zM10 5q2 2 0 4M12 3q4 4 0 8"/></svg>
            <svg class="h-3.5 w-5" viewBox="0 0 20 14"><rect x="1" y="2" width="16" height="10" rx="3" fill="#2f7d3f" stroke="#e8e8e8" stroke-width="1.500"/><path d="M18.500 5v4" stroke="#e8e8e8" stroke-width="2"/><path d="M9 0v8M6 5l3 3 3-3" stroke="#fff" stroke-width="1.500" fill="none"/></svg>
            <div class="ml-1.5 text-right leading-[17px]">오전 9:07<br>2026-04-15</div>
            <svg class="h-4 w-3.5" viewBox="0 0 14 16" fill="currentColor"><path d="M1 13l2-3V6q0-5 4-5t4 5v4l2 3zM5 14h4v2H5z"/><path d="M8 3h4L8 7h4" stroke="#262524" fill="none" stroke-width="1.300"/></svg>
        </div>
    </div>

    <!-- Broadcast overlay -->
    <div class="pointer-events-none absolute top-[52px] right-16 w-[315px]">
        <p class="font-['Inter',sans-serif] text-[72px] leading-[83px] font-semibold whitespace-nowrap text-white/85">3PRO TV</p>
        <p class="h-[45px] bg-[#0fa377] text-center font-['Noto_Sans_CJK_KR',sans-serif] text-[30px] leading-[44px] font-bold text-white">더블 밸류업</p>
    </div>

    <!-- Pointer highlight -->
    <div class="pointer-events-none absolute top-[706px] left-[1185px] size-12 rounded-full bg-[#f8f552]/90"></div>
    <svg class="pointer-events-none absolute top-[730px] left-[1208px] h-[19px] w-3" viewBox="0 0 12 19"><path d="M1 1v14l3-3 3 6 2-1-3-6h5z" fill="#f5f5e8" stroke="#555"/></svg>

    <script>
        const RED = 'text-[#c4122f]';
        const BLUE = 'text-[#1414c4]';
        const tri = (up) => up
            ? '<svg class="size-2.5 text-[#d3001c]"><use href="#i-up"/></svg>'
            : '<svg class="size-2.5 text-[#0f0fd0]"><use href="#i-down"/></svg>';
        const put = (id, html) => { document.getElementById(id).innerHTML = html; };

        document.querySelectorAll('.win-tools').forEach((el) => {
            el.append(document.getElementById('window-tools').content.cloneNode(true));
        });

        // Menus and toolbar
        put('menu', ['설정', '주문/체결', '주식', '차트/검색', '시장동향', '투자정보', '선물옵션', 'CFD', '해외주식', '금융상품', '미국주식옵션', '온라인지점', '고객서비스', '신용/대출', '보기']
            .map((m) => `<a href="#">${m}</a>`).join(''));

        put('quick', [['핫픽', '스'], ['종합', '+'], ['현재', '가'], ['관심', '종목'], ['순위', '분석'], ['뉴스', '시황'], ['종합', '차트'], ['매매', '동향'], ['주식', '종합'], ['주식', '주문'], ['주문', '체결'], ['계좌', '평가'], ['ELW', ''], ['해외', '증시'], ['업종', '동향'], ['프로', '그램'], ['테마', '그룹'], ['시간', '단일']]
            .map(([a, b], i) => `<button class="relative h-10 w-10 border-l border-[#5d7d97] bg-[#426582] pl-1.5 text-left leading-[14px] align-top ${i === 1 ? 'text-[#e3e36a]' : 'text-[#dbe6ee]'}">${a}<br>${b || '&nbsp;'}${[2, 5, 6, 7, 9, 10, 11, 12, 13, 14, 16, 17].includes(i) ? '<i class="absolute right-0.5 bottom-0.5 size-1.5 bg-white [clip-path:polygon(100%_0,100%_100%,0_100%)]"></i>' : ''}</button>`).join(''));

        put('screens', ['뉴스종합', '(투)Map', '증시자금', '환율주가', '(투)시간'].map((t, i) => `
            <div class="flex w-[98px] items-center gap-1 border-r border-[#a5b3bb] px-[3px] ${i === 4 ? 'bg-white' : 'bg-[#e9eef0]'}">
                <b class="h-4 w-4 text-center leading-4 text-[#e5e5e5] ${i === 4 ? 'bg-[#356387]' : 'bg-[#8d8d8d]'}">1</b><a href="#" class="flex-1">${t}</a>
                <button aria-label="닫기" class="mr-1 ${i === 4 ? 'text-[#333]' : 'text-[#888]'}"><svg class="size-2" viewBox="0 0 8 8" stroke="currentColor" stroke-width="1.500"><path d="M1 0l6 8M7 0L1 8"/></svg></button>
            </div>`).join(''));

        // News list
        const news = [
            ['코스닥, 18.74P 오른 1140.62 출발(1.67%↑)', '', '0', '아시아경제', '증권'],
            ['아이티엠반도체(084850) +4.70%, SJG세종 +3.43%, 러셀 +3.42%, 에스피', '아이티엠', '0', '인포스탁', '코스닥종'],
            ['성호전자(043260) 상승폭 확대 +9.59%, 4거래일 연속 상승', '성호전자', '0', '인포스탁', '코스닥종'],
            ["경남제약,&nbsp; '레모나 젤레몬'&nbsp; 신제품 출시", '경남제약', '+3', '이투데이', '증권'],
            ['SBA, 게임기업에 벤츠 플랫폼 진출 기회준다', '', '0', '파이낸셜', '산업'],
        ];
        put('news', news.map((n, i) => `
            <tr class="h-5 *:p-0 *:whitespace-nowrap ${i % 2 ? 'bg-[#f3f3f3]' : 'bg-white'}">
                <td class="text-xs"><span class="pl-0.5">04-15</span></td><td class="text-xs">09:07</td><td class="text-center ${i === 3 ? RED : ''}">*</td>
                <td class="${i === 3 ? 'font-bold text-[#d3143a]' : ''}"><span class="block w-[394px] overflow-hidden">${n[0]}</span></td>
                <td class="border-l border-[#e0e0e0]"><span class="pl-0.5">${n[1]}</span></td><td class="text-center ${i === 3 ? RED : ''}">${n[2]}</td><td><span class="pl-1">${n[3]}</span></td><td>${n[4]}</td>
            </tr>`).join(''));

        // Sector map, lower row
        const sectors = [['금융업', 'w-[122px]'], ['운수장비', 'w-[108px]'], ['의약품', 'w-[53px]'], ['기계', 'w-[49px]'], ['유통업', 'w-[60px]'], ['서비스', 'w-[41px]']];
        put('sectors', sectors.map(([s, w], i) => `
            <div class="shrink-0 overflow-hidden border-r border-[#dadada] pl-1 text-xs leading-3 whitespace-nowrap ${w}">
                <b class="mb-1 block text-[13px]">${s}</b>${i > 3 ? '' : ['외국인', '개인', '기관계'].map((p) => `<p class="flex"><span class="w-[48px] shrink-0">${p}</span>${i < 2 ? '[0]' : ''}</p>`).join('')}
            </div>`).join(''));

        // Industry table
        const industries = [['제조업', '17,041.61', '41.63'], ['전기전자', '82,523.79', '28.91'], ['금융업', '1,033.68', '8.52'], ['운수장비', '6,090.82', '5.30'], ['화학', '4,999.04', '2.04'], ['의약품', '16,771.55', '1.75'], ['기계', '3,804.75', '1.51'], ['IT 서비스', '1,188.41', '1.32'], ['철강금속', '8,772.68', '1.29'], ['보험업', '39,601.31', '1.18'], ['유통업', '579.47', '1.17'], ['증권', '8,505.95', '1.07'], ['서비스업', '1,498.19', '0.68'], ['운수창고', '2,065.42', '0.65']];
        put('industries', industries.map((r, i) => `
            <tr class="h-[19px] *:border-r *:border-[#e2e2e2] *:p-0 *:text-right ${i % 2 ? 'bg-[#f2f2f2]' : 'bg-white'}">
                <th class="text-[13px] font-normal"><span class="block pl-0.5 text-left">${r[0]}</span></th><td><span class="pr-0.5">${r[1]}</span></td><td><span class="pr-1">0.00</span></td><td><span class="pr-1">0</span></td><td><span class="pr-3">${r[2]}</span></td>
            </tr>`).join(''));

        // Market funds
        const funds = [
            ['04/15', '6,143.34', 1, '175.59', '2.94', '87,280', '0', '0', '0'],
            ['04/14', '5,967.75', 1, '159.13', '2.74', '889,491', '0', '0', '0'],
            ['04/13', '5,808.62', 0, '50.25', '-0.86', '1,083,211', '0', '0', '0'],
            ['04/10', '5,858.87', 1, '80.86', '1.40', '1,002,354', '1,153,642', '329,014', '2,877,664'],
            ['04/09', '5,778.01', 0, '94.33', '-1.61', '1,026,733', '1,128,070', '327,200', '2,859,304'],
            ['04/08', '5,872.34', 1, '377.56', '6.87', '932,611', '1,098,332', '327,300', '2,854,281'],
            ['04/07', '5,494.78', 1, '44.45', '0.82', '990,449', '1,089,214', '326,577', '2,773,656'],
            ['04/06', '5,450.33', 1, '73.03', '1.36', '1,110,507', '1,074,674', '328,459', '2,759,982'],
            ['04/03', '5,377.30', 1, '143.25', '2.74', '1,185,178', '1,090,165', '324,440', '2,744,369'],
            ['04/02', '5,234.05', 0, '244.65', '-4.47', '1,428,160', '1,085,740', '327,255', '2,698,331'],
        ];
        put('funds', funds.map((r, i) => {
            const c = r[2] ? RED : BLUE;
            return `<tr class="h-[19px] *:border-r *:border-[#e2e2e2] *:py-0 *:pr-[3px] *:pl-0 *:text-right ${i % 2 ? 'bg-[#f2f2f2]' : 'bg-white'}">
                <td><span class="pr-1.5">2026/${r[0]}</span></td><td class="${c}">${r[1]}</td>
                <td class="${c}"><span class="flex items-center justify-between pl-0.5">${tri(r[2])}${r[3]}</span></td>
                <td class="${c}">${r[4]}</td>${r.slice(5).map((v) => `<td>${v}</td>`).join('')}
            </tr>`;
        }).join(''));

        // Exchange rates
        const rates = [
            ['원/달러', '1,473.70', '0.07', 0, '24.80', 1, '8.70'],
            ['일본 엔/달러', '158.80', '0.04', 0, '0.92', 1, '0.62'],
            ['원/일본 엔', '9.2790', '0.29', 0, '0.15', 0, '0.00'],
            ['중국 위안/달러', '6.8175', '-0.19', 0, '0.08', 0, '0.16'],
            ['유로/달러', '0.84770', '0.12', 0, '0.02', 0, '0.01'],
            ['홍콩 달러/달러', '7.8338', '0.01', 1, '0.00', 1, '0.04'],
            ['영국 파운드/달', '0.73676', '0.10', 0, '0.02', 0, '0.01'],
            ['대만 뉴달러/달', '31.52', '-0.06', 0, '0.62', 0, '0.04'],
        ];
        while (rates.length < 21) rates.push(null);
        put('rates', rates.map((r, i) => {
            const row = 'h-[19px] *:border-r *:border-[#e2e2e2] *:py-0 *:pr-[3px] *:pl-0 *:text-right';
            if (!r) return `<tr class="${row} ${i % 2 ? 'bg-[#f7f7f7]' : 'bg-white'}"><td></td><td></td><td></td><td></td><td></td></tr>`;
            const c = r[2][0] === '-' ? BLUE : RED;
            return `<tr class="${row} ${i % 2 ? 'bg-[#f2f2f2]' : 'bg-white'}">
                <th class="text-[13px] whitespace-nowrap ${i ? 'font-normal' : 'font-bold'}"><span class="block pl-1 text-left">${r[0]}</span></th><td class="${c}">${r[1]}</td><td class="${c}">${r[2]}</td>
                <td class="${r[3] ? RED : BLUE}"><span class="flex items-center justify-between pl-0.5">${tri(r[3])}${r[4]}</span></td>
                <td class="${r[5] ? RED : BLUE}"><span class="flex items-center justify-between pl-0.5">${tri(r[5])}${r[6]}</span></td>
            </tr>`;
        }).join(''));

        // Investors
        const sign = (v) => (v[0] === '-' ? BLUE : RED);
        const totals = [
            ['순매수', '-1,434', '6,820', '-5,046', '253', '321', '-6,352', '16', '-4', '24', '696', '-421'],
            ['매도', '16,300', '66,567', '10,112', '307', '503', '7,820', '4', '7', '6', '1,464', '1,187'],
            ['매수', '14,867', '73,387', '5,066', '560', '824', '1,468', '20', '3', '30', '2,161', '766'],
            ['증감', '159', '-44', '-148', '-65', '-11', '-300', '4', '-1', '16', '209', '32'],
        ];
        put('totals', totals.map((r, i) => `
            <tr class="h-[19px] *:border *:border-[#dcdcdc] *:py-0 *:pr-[3px] *:pl-0">
                <th class="bg-[#e6e9ea] text-[13px] font-normal">${r[0]}</th>
                ${r.slice(1).map((v, j) => `<td class="text-right ${i === 0 || i === 3 ? sign(v) : ''} ${i === 0 && j < 3 ? 'font-bold' : ''}">${v}</td>`).join('')}
            </tr>`).join(''));

        const times = `09:06:00|-1,521|6,934|-5,046|301|328|-6,265|12|-3|16|565|-431
09:04:30|-1,680|6,978|-4,898|366|339|-5,965|8|-2||356|-463
09:03:00|-1,703|6,380|-4,232|394|323|-4,983|3|-2||32|-500
09:01:30|-1,374|5,427|-3,594|432|320|-4,424|1|-1||78|-493
09:00:00|-506|1,875|-856|478|307|-1,611||||-29|-521
08:58:30|-506|1,875|-856|478|307|-1,611||||-29|-521
08:57:00|-506|1,875|-856|478|307|-1,611||||-29|-521
08:55:30|-506|1,875|-856|478|307|-1,611||||-29|-521
08:54:00|-506|1,875|-856|478|307|-1,611||||-29|-521
08:52:30|-506|1,875|-856|478|307|-1,611||||-29|-521
08:51:00|-506|1,875|-856|478|307|-1,611||||-29|-521
08:49:30|-512|1,975|-971|477|305|-1,724||||-29|-500
08:48:00|-496|2,060|-1,099|464|279|-1,812||||-29|-473
08:46:30|-516|2,311|-1,330|435|253|-1,990||||-29|-478
08:45:00|-464|2,281|-1,361|418|239|-1,989||||-29|-468`.split('\n').map((l) => l.split('|'));
        put('times', times.map((r, i) => `
            <tr class="h-[19px] *:border-r *:border-[#dcdcdc] *:py-0 *:pr-[3px] *:pl-0 *:text-right ${i % 2 ? 'bg-[#f2f2f2]' : 'bg-white'}">
                <td>${r[0]}</td>${r.slice(1).map((v) => `<td class="${v ? sign(v) : ''}">${v}</td>`).join('')}
            </tr>`).join(''));
    </script>
</body>
</html>
